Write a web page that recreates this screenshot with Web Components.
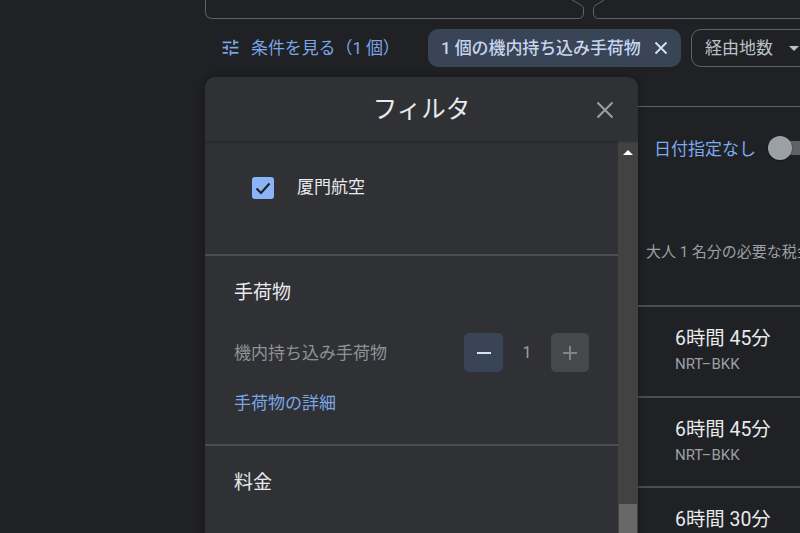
<!DOCTYPE html>
<html lang="ja"><head><meta charset="utf-8"><title>フィルタ</title>
<style>
html,body{margin:0;height:533px;overflow:hidden;background:#202124}
body{font-family:Roboto,"Noto Sans CJK JP",sans-serif;color:#e8eaed}
</style></head><body>
<fl-app>
  <fl-fields slot="base"></fl-fields>
  <fl-toolbar slot="base">
    <fl-chip>1 個の機内持ち込み手荷物</fl-chip>
    <fl-dropdown>経由地数</fl-dropdown>
  </fl-toolbar>
  <fl-results slot="base">
    <fl-result time="6時間 45分" route="NRT–BKK"></fl-result>
    <fl-result time="6時間 45分" route="NRT–BKK"></fl-result>
    <fl-result time="6時間 30分" route="NRT–BKK"></fl-result>
  </fl-results>
  <fl-dialog slot="over" title="フィルタ">
    <fl-check>厦門航空</fl-check>
    <fl-section heading="手荷物" style="--pad-b:29px">
      <fl-stepper label="機内持ち込み手荷物" value="1"></fl-stepper>
      <a-link>手荷物の詳細</a-link>
    </fl-section>
    <fl-section heading="料金"></fl-section>
  </fl-dialog>
</fl-app>
<script>
const def=(name,html,init)=>customElements.define(name,class extends HTMLElement{
  constructor(){super();this.attachShadow({mode:'open'}).innerHTML=html}
  connectedCallback(){init&&init(this,this.shadowRoot)}
});
def('fl-app',`<style>
:host{display:block;position:relative;width:800px;height:533px;overflow:hidden}
.base{display:flex;flex-direction:column;margin-left:205px}
</style><div class="base"><slot name="base"></slot></div><slot name="over"></slot>`);
def('fl-fields',`<style>:host{display:block;height:19px}svg{display:block}</style>
<svg width="595" height="19" viewBox="205 0 595 19" fill="none" stroke="#5f6368">
<path d="M205.5 -5V11.5Q205.5 18.5 212.5 18.5H578Q583.5 18.5 583.5 13V8.5Q583.5 6.5 581 5L572 0"/>
<path d="M604 0L596 5Q593.5 6.5 593.5 8.5V13Q593.5 18.5 599 18.5H800"/></svg>`);
def('fl-toolbar',`<style>
:host{display:flex;align-items:center;height:38px;margin-top:10px;width:700px}
.see{display:flex;align-items:center;width:223px;color:#7ba6e6;font-size:17px;white-space:nowrap}
.see span{position:relative;top:-2px;letter-spacing:-.1px}
svg{margin:-2px 10px 0 15px;flex:none}
.gap{display:flex;gap:10px;align-items:center}
</style><div class="see"><svg width="21" height="21" viewBox="0 0 24 24" fill="#7ba6e6"><path d="M3 17v2h6v-2H3zM3 5v2h10V5H3zm10 16v-2h8v-2h-8v-2h-2v6h2zM7 9v2H3v2h4v2h2V9H7zm14 4v-2H11v2h10zm-6-4h2V7h4V5h-4V3h-2v6z"/></svg><span>条件を見る（1 個）</span></div><div class="gap"><slot></slot></div>`);
def('fl-chip',`<style>
:host{display:flex;align-items:center;box-sizing:border-box;height:38px;width:253px;background:#394457;border-radius:10px;padding:0 14px 0 13px;color:#c6d6ee;font-size:17px;font-weight:500;white-space:nowrap}
span{flex:1;position:relative;top:-2px;letter-spacing:-.1px}svg{flex:none;margin-right:-2px}
</style><span><slot></slot></span><svg width="16" height="16" viewBox="0 0 16 16" stroke="#d2e3fc" stroke-width="1.8"><path d="M2.5 2.5l11 11M13.5 2.5l-11 11"/></svg>`);
def('fl-dropdown',`<style>
:host{display:flex;align-items:center;box-sizing:border-box;height:38px;width:130px;border:1px solid #5f6368;border-radius:10px;padding:0 13px;color:#bdc1c6;font-size:17px;white-space:nowrap}
i{width:0;height:0;border:5px solid transparent;border-top-color:#bdc1c6;border-bottom:0;margin-left:16px}
span{position:relative;top:-2px}
</style><span><slot></slot></span><i></i>`);
def('fl-results',`<style>
:host{display:block;margin:39px 0 0 433px;width:162px;border-top:1px solid #5f6368}
.date{display:flex;align-items:center;height:82px;padding-left:16px;color:#7baaf0;font-size:17px;white-space:nowrap}
.date span{position:relative;top:-1px}
.sw{position:relative;margin-left:12px;flex:none;width:40px;height:14px;background:#5f6368;border-radius:7px 0 0 7px}
.sw:before{content:"";position:absolute;left:0;top:-5px;width:24px;height:24px;border-radius:50%;background:#9aa0a6;box-shadow:0 1px 2px #0006}
.note{box-sizing:border-box;height:118px;padding:53px 0 0 8px;color:#9aa0a6;font-size:15px;white-space:nowrap;overflow:hidden;line-height:20px;border-bottom:2px solid #4b4d51}
</style><div class="date"><span>日付指定なし</span><div class="sw"></div></div>
<div class="note">大人 1 名分の必要な税金</div><slot></slot>`);
def('fl-result',`<style>
:host{display:block;box-sizing:border-box;height:90.5px;border-bottom:2px solid #4b4d51;padding:19px 0 0 37px}
.t{font-size:19.4px;line-height:26px;color:#e8eaed;white-space:nowrap}.r{font-size:15px;line-height:20px;color:#9aa0a6;margin-top:2px}
</style><div class="t"></div><div class="r"></div>`,(h,s)=>{s.querySelector('.t').textContent=h.getAttribute('time');s.querySelector('.r').textContent=h.getAttribute('route')});
def('fl-dialog',`<style>
:host{position:absolute;left:205px;top:77px;width:433px;height:470px;background:#303135;border-radius:10px 10px 0 0;box-shadow:0 0 8px #0005;display:flex;flex-direction:column;overflow:hidden}
header{flex:none;box-sizing:border-box;height:64px;padding-bottom:4px;display:flex;align-items:center;justify-content:center;position:relative;font-size:24.5px;color:#e8eaed;box-shadow:0 1px 2px #0004;z-index:1}
header svg{position:absolute;right:24px;top:24px}
.body{flex:1;display:flex;min-height:0}
.scroll{flex:1;min-width:0}
.bar{flex:none;width:20px;background:#424242;position:relative}
.bar:before{content:"";position:absolute;left:5px;top:9px;border:5px solid transparent;border-bottom:5px solid #fff;border-top:0}
.bar:after{content:"";position:absolute;left:1px;right:1px;top:363px;height:80px;background:#686868}
</style><header><span id="t"></span><svg width="18" height="18" viewBox="0 0 18 18" stroke="#9aa0a6" stroke-width="2"><path d="M1.5 1.5l15 15M16.5 1.5l-15 15"/></svg></header>
<div class="body"><div class="scroll"><slot></slot></div><div class="bar"></div></div>`,(h,s)=>{s.getElementById('t').textContent=h.getAttribute('title');h.removeAttribute('title')});
def('fl-check',`<style>
:host{display:flex;align-items:center;height:113px;box-sizing:border-box;padding:0 0 24px 47px;font-size:17px;color:#e8eaed}
.b{width:22px;height:22px;background:#8ab4f8;border-radius:3px;margin:5px 23px 0 0;flex:none}svg{display:block}
</style><div class="b"><svg width="22" height="22" viewBox="0 0 22 22" fill="none" stroke="#202124" stroke-width="2.2"><path d="M4.5 11.5l4.5 4.5 8.5-9.5"/></svg></div><slot></slot>`);
def('fl-section',`<style>
:host{display:block;border-top:2px solid #4b4d51;padding:22px 0 0 29px;padding-bottom:var(--pad-b,0)}
h3{margin:0;font-weight:400;font-size:19px;line-height:28px;color:#e8eaed;position:relative;top:1px}
</style><h3></h3><slot></slot>`,(h,s)=>{s.querySelector('h3').textContent=h.getAttribute('heading')});
def('fl-stepper',`<style>
:host{display:flex;align-items:center;height:39px;margin:27px 29px 0 0;font-size:17px;color:#8f9297}
.l{flex:1;white-space:nowrap;position:relative;top:-1px}
.k{box-sizing:border-box;width:39px;height:39px;border-radius:5px;display:flex;align-items:center;justify-content:center}
.m{background:#394457}.p{background:#47484b;width:38px}
.v{width:48px;text-align:center;font-size:16px;color:#9aa0a6}svg{display:block}
</style><span class="l"></span><div class="k m"><svg width="14" height="14" stroke="#d2e3fc" stroke-width="2"><path d="M0 7h14"/></svg></div><span class="v"></span><div class="k p"><svg width="14" height="14" stroke="#80848a" stroke-width="2"><path d="M0 7h14M7 0v14"/></svg></div>`,(h,s)=>{s.querySelector('.l').textContent=h.getAttribute('label');s.querySelector('.v').textContent=h.getAttribute('value')});
def('a-link',`<style>:host{display:block;margin-top:19px;font-size:17px;line-height:24px;color:#7ba6e6}</style><slot></slot>`);
</script>
</body></html>
